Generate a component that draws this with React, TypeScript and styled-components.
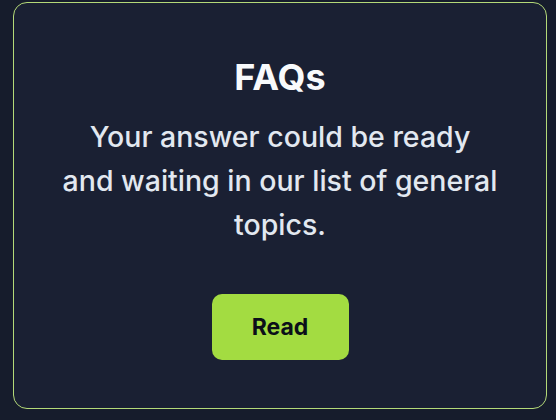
import { FC } from 'react';
import styled, { createGlobalStyle } from 'styled-components';

const GlobalStyle = createGlobalStyle`
  html, body {
    margin: 0;
    padding: 0;
    background: #161c2c;
  }
  body {
    font-family: Inter, 'Noto Sans', sans-serif;
  }
`;

const Page = styled.div`
  width: 556px;
  height: 420px;
  box-sizing: border-box;
  padding: 2px 9px 11px 13px;
`;

const Card = styled.section`
  height: 100%;
  box-sizing: border-box;
  border: 1.5px solid #b4d978;
  border-radius: 14px;
  background: #1a2033;
  display: flex;
  flex-direction: column;
  align-items: center;
  padding-top: 52px;
`;

const Title = styled.h2`
  margin: 0;
  font-size: 36px;
  font-weight: 700;
  color: #f8fafc;
  line-height: 44px;
`;

const Text = styled.p`
  margin: 16px 0 0;
  width: 480px;
  text-align: center;
  font-size: 28.5px;
  font-weight: 500;
  line-height: 44px;
  color: #e2e8f0;
`;

const ReadButton = styled.button`
  margin-top: 47px;
  width: 137px;
  height: 66px;
  border: none;
  border-radius: 10px;
  background: #a3dc41;
  color: #0b0f19;
  font-family: Inter, sans-serif;
  font-size: 23px;
  font-weight: 700;
  cursor: pointer;
`;

const App: FC = () => (
  <>
    <GlobalStyle />
    <Page>
      <Card>
        <Title>FAQs</Title>
        <Text>
          Your answer could be ready
          <br />
          and waiting in our list of general topics.
        </Text>
        <ReadButton>Read</ReadButton>
      </Card>
    </Page>
  </>
);

export default App;
